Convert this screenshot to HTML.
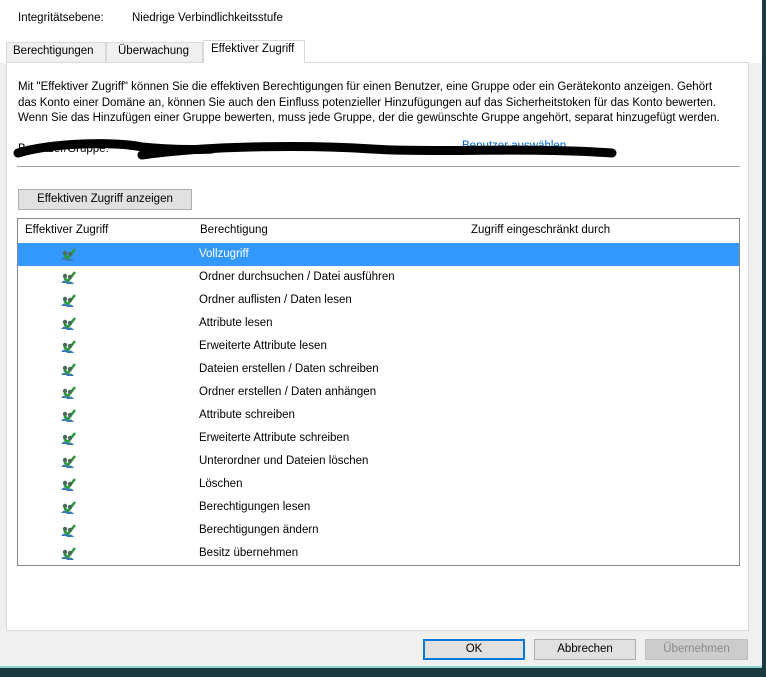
<!DOCTYPE html>
<html><head><meta charset="utf-8"><style>
*{margin:0;padding:0;box-sizing:border-box}
body{width:766px;height:677px;overflow:hidden;background:#1d3a40;font-family:"Liberation Sans",sans-serif;font-size:11.5px;color:#000;position:relative}
.win{position:absolute;left:0;top:0;width:762px;height:668px;background:#f0f0f0;border-bottom:2px solid #8fd0d0}
.top{position:absolute;left:0;top:0;width:762px;height:63px;background:#fff}
.abs{position:absolute;white-space:nowrap}
.tab{position:absolute;top:42px;height:21px;border:1px solid #d9d9d9;border-bottom:none;background:#f0f0f0;padding:2px 6px}
.panel{position:absolute;left:6px;top:62px;width:743px;height:569px;background:#fff;border:1px solid #d9d9d9}
.btn{position:absolute;height:21px;border:1px solid #adadad;background:#e1e1e1;text-align:center;line-height:19px}
.row{position:absolute;left:1px;width:721px;height:23px;line-height:23px}
.ic{position:absolute;left:42px;top:4px}
.tx{position:absolute;left:181px}
</style></head><body>
<div class="win">
<div class="top"></div>
<div class="abs" style="left:18px;top:12px">Integritätsebene:</div>
<div class="abs" style="left:132px;top:12px">Niedrige Verbindlichkeitsstufe</div>
<div class="tab" style="left:6px;width:100px">Berechtigungen</div>
<div class="tab" style="left:106px;width:97px;padding-left:11px">Überwachung</div>
<div class="tab" style="left:203px;top:40px;height:23px;width:102px;background:#fff;z-index:2;padding-left:7px">Effektiver Zugriff</div>
<div class="panel">
<div class="abs" style="left:11px;top:17px;line-height:15.5px">Mit "Effektiver Zugriff" können Sie die effektiven Berechtigungen für einen Benutzer, eine Gruppe oder ein Gerätekonto anzeigen. Gehört<br>das Konto einer Domäne an, können Sie auch den Einfluss potenzieller Hinzufügungen auf das Sicherheitstoken für das Konto bewerten.<br>Wenn Sie das Hinzufügen einer Gruppe bewerten, muss jede Gruppe, der die gewünschte Gruppe angehört, separat hinzugefügt werden.</div>
<div class="abs" style="left:11px;top:80px">Benutzer/Gruppe:</div>
<div class="abs" style="left:455px;top:77px;color:#0066cc">Benutzer auswählen</div>
<svg class="abs" style="left:5px;top:72px" width="620" height="28"><path d="M6 18 C40 8 100 6 130 12 C170 16 200 14 200 14 M130 20 C200 10 300 10 360 14 C420 18 520 12 600 18" stroke="#000" stroke-width="9" fill="none" stroke-linecap="round"/></svg>
<div class="abs" style="left:10px;top:103px;width:723px;border-top:1px solid #a0a0a0"></div>
<div class="btn" style="left:11px;top:126px;width:174px">Effektiven Zugriff anzeigen</div>
<div class="abs" style="left:10px;top:155px;width:723px;height:348px;border:1px solid #828790">
<div class="row" style="top:0;height:23px"><span class="abs" style="left:6px">Effektiver Zugriff</span><span class="tx">Berechtigung</span><span class="abs" style="left:452px">Zugriff eingeschränkt durch</span></div>
</div>
</div>
<div id="list" class="abs" style="left:17px;top:243px;width:721px">
<div class="row" style="top:0;background:#3399ff;color:#fff"><span class="tx">Vollzugriff</span></div>
<div class="row" style="top:23px"><span class="tx">Ordner durchsuchen / Datei ausführen</span></div>
<div class="row" style="top:46px"><span class="tx">Ordner auflisten / Daten lesen</span></div>
<div class="row" style="top:69px"><span class="tx">Attribute lesen</span></div>
<div class="row" style="top:92px"><span class="tx">Erweiterte Attribute lesen</span></div>
<div class="row" style="top:115px"><span class="tx">Dateien erstellen / Daten schreiben</span></div>
<div class="row" style="top:138px"><span class="tx">Ordner erstellen / Daten anhängen</span></div>
<div class="row" style="top:161px"><span class="tx">Attribute schreiben</span></div>
<div class="row" style="top:184px"><span class="tx">Erweiterte Attribute schreiben</span></div>
<div class="row" style="top:207px"><span class="tx">Unterordner und Dateien löschen</span></div>
<div class="row" style="top:230px"><span class="tx">Löschen</span></div>
<div class="row" style="top:253px"><span class="tx">Berechtigungen lesen</span></div>
<div class="row" style="top:276px"><span class="tx">Berechtigungen ändern</span></div>
<div class="row" style="top:299px"><span class="tx">Besitz übernehmen</span></div>
</div>
<div class="btn" style="left:423px;top:639px;width:102px;border:2px solid #0078d7;line-height:17px">OK</div>
<div class="btn" style="left:534px;top:639px;width:102px">Abbrechen</div>
<div class="btn" style="left:645px;top:639px;width:103px;color:#8a8a8a;border-color:#bfbfbf;background:#ccc">Übernehmen</div>
</div>
<script>
var svg='<svg width="16" height="14"><path d="M4 8 L8 11 L15 2" stroke="#2a9a3a" stroke-width="2.5" fill="none"/><circle cx="5" cy="6" r="2.2" fill="#4a6a5a"/><circle cx="10" cy="7" r="2.2" fill="#4a6a5a"/><path d="M1 13 Q5 8 8 13 Z" fill="#3a7ab0"/><path d="M6 14 Q10 9 14 14 Z" fill="#3a7ab0"/></svg>';
document.querySelectorAll('#list .row').forEach(function(r){var s=document.createElement('span');s.className='ic';s.innerHTML=svg;r.insertBefore(s,r.firstChild);});
</script>
</body></html>
